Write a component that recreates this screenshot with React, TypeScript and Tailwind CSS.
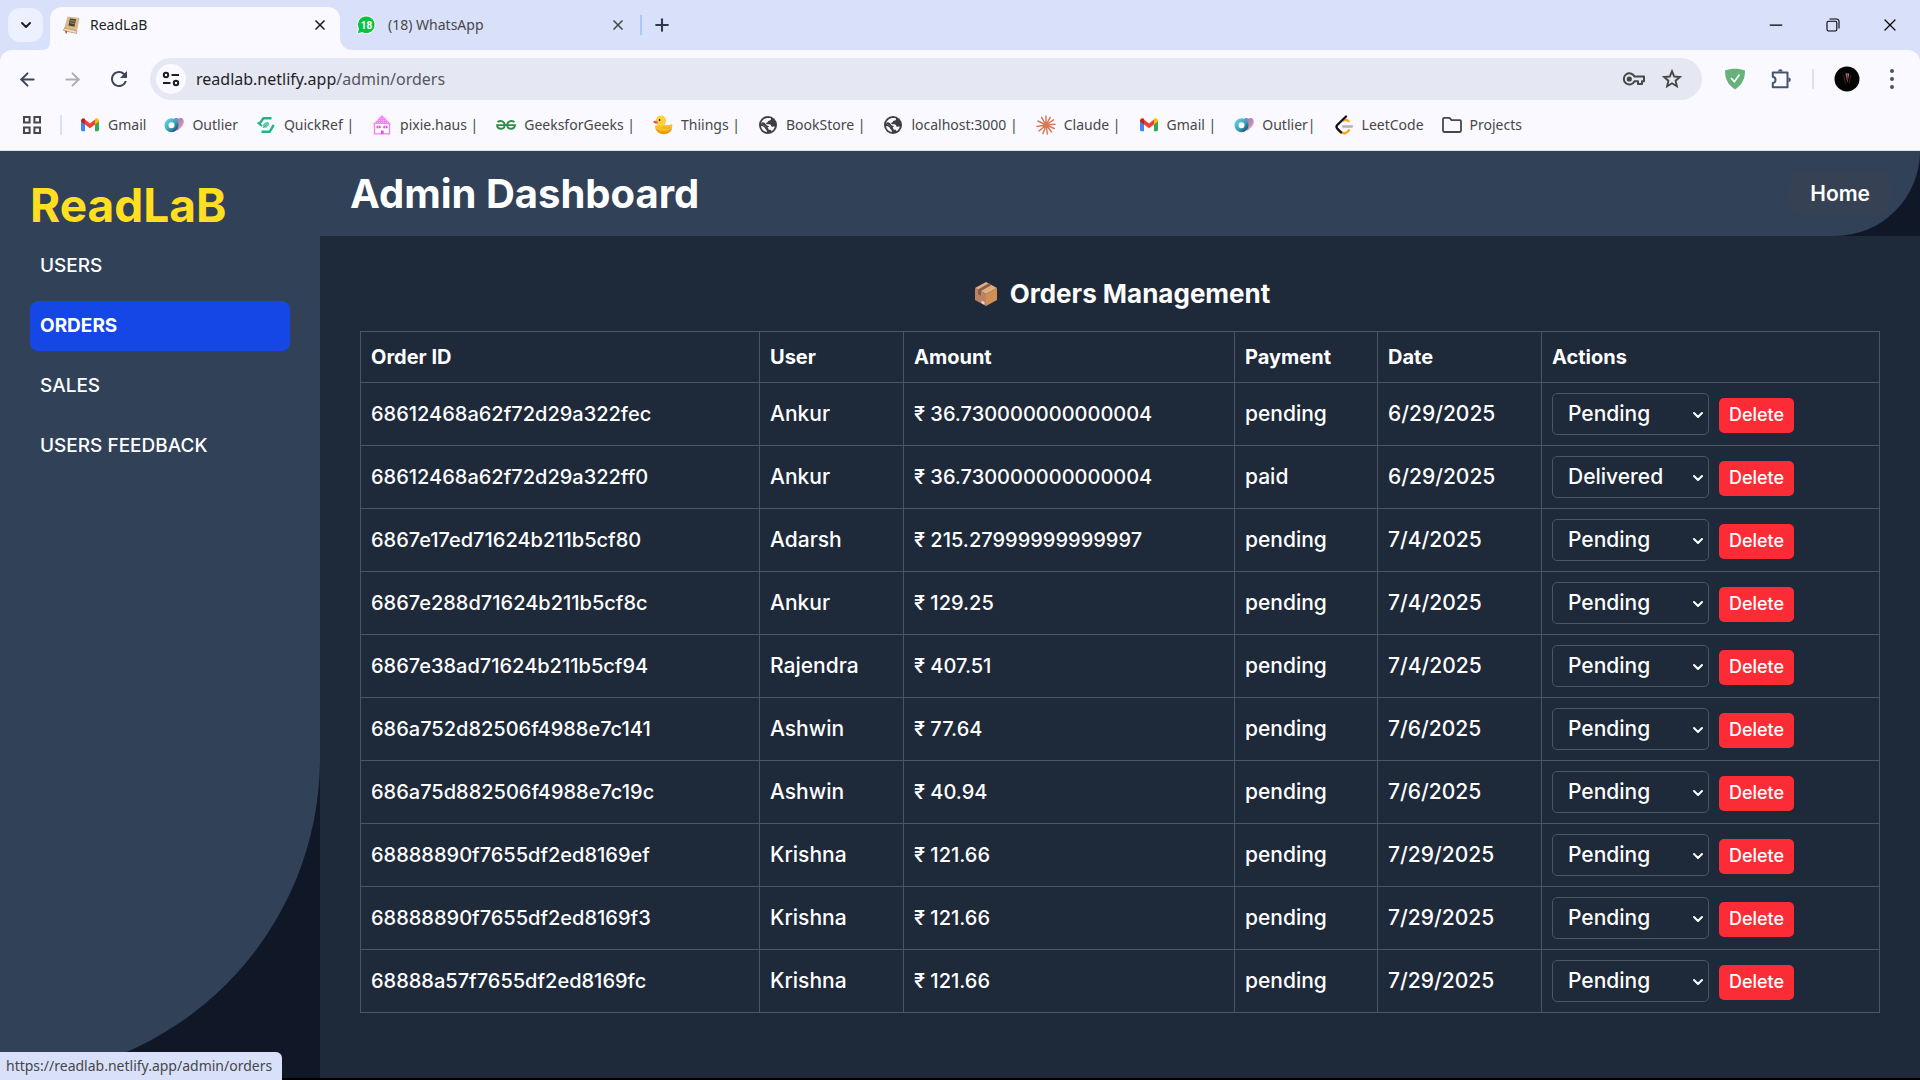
import { useState, type ReactNode } from "react";
import { ChevronDown, X, Plus, ArrowLeft, ArrowRight, Minus } from "lucide-react";
import { MdRefresh } from "react-icons/md";

type IconProps = { className?: string };

const GmailIcon = () => (
  <svg viewBox="0 0 20 20" className="size-5 shrink-0">
    <path d="M1 5.5v9.3c0 .9.6 1.5 1.5 1.5H5V8.2z" fill="#4285f4" />
    <path d="M19 5.5v9.3c0 .9-.6 1.5-1.5 1.5H15V8.2z" fill="#34a853" />
    <path d="M5 4.6v4.8l5 3.8 5-3.8V4.6l-5 3.8z" fill="#ea4335" />
    <path d="M1 5.7C1 3.6 3.300 2.600 5 3.800l0 5.600L1 6.400z" fill="#c5221f" />
    <path d="M19 5.700C19 3.600 16.700 2.600 15 3.800l0 5.600 4-3z" fill="#fbbc04" />
  </svg>
);

const OutlierIcon = () => (
  <svg viewBox="0 0 20 20" className="size-5 shrink-0">
    <defs>
      <linearGradient id="outlierHeart" x1="0" y1="0" x2="1" y2="1">
        <stop offset="0" stopColor="#6a78c8" />
        <stop offset="0.6" stopColor="#c98fae" />
        <stop offset="1" stopColor="#f3c3b4" />
      </linearGradient>
      <linearGradient id="outlierRing" x1="0" y1="0" x2="1" y2="1">
        <stop offset="0" stopColor="#5fd0de" />
        <stop offset="0.6" stopColor="#3a9bb4" />
        <stop offset="1" stopColor="#1d5576" />
      </linearGradient>
    </defs>
    <path d="M9 5c2-2.500 4-2.500 5.500-1.200C17 1.800 20 3.600 19.800 7c-.3 4-4 6.500-6.300 9z" fill="url(#outlierHeart)" />
    <circle cx="7.500" cy="10.300" r="5" fill="#fff" stroke="url(#outlierRing)" strokeWidth="4" />
  </svg>
);

const QuickRefIcon = () => (
  <svg viewBox="0 0 20 20" className="size-5 shrink-0" fill="none" stroke="#21b583">
    <path d="M15.500 3.200H7.500L3.200 9" strokeWidth="2.400" />
    <path d="M5.500 16.800h8.200l4-7" strokeWidth="2.400" />
    <path d="M1.500 7.500l4.500 3.500" strokeWidth="1.800" />
    <path d="M7.800 11.800c-.6-2.400.8-4.400 4.600-4 .2 3-1.800 5.200-4.600 4z" fill="#7bd8b8" strokeWidth=".9" />
    <path d="M7 13l3.500-3.500" strokeWidth=".9" />
  </svg>
);

const PixieIcon = () => (
  <svg viewBox="0 0 20 20" className="size-5 shrink-0">
    <path d="M10 0l2 2.500h1.500V4L17 7l2 2.500H1L3 7l3.500-3V2.500H8z" fill="#fb7af5" />
    <path d="M3 7.500h14M5 5.500h10M7.500 3.500h5" stroke="#fbd5fa" strokeWidth=".8" strokeDasharray="1 1" />
    <path d="M2.500 9v9.800h15V9" fill="#fff" stroke="#fb7af5" strokeWidth="1.300" />
    <path d="M4.500 10.800h4.200v2.400H4.500zM11.300 10.800h4.200v2.400h-4.200zM9 15.500h2.600v3.500H9z" fill="#f046e8" />
    <path d="M6.600 10.800v2.400M13.400 10.800v2.400" stroke="#fff" strokeWidth=".6" />
  </svg>
);

const GeeksIcon = () => (
  <svg viewBox="0 0 20 20" className="size-5 shrink-0" fill="none" stroke="#2f8d46" strokeWidth="1.900">
    <path d="M1.600 7.200C3 5.400 8.600 5.300 8.700 10.200c0 5-7.400 4.600-7.600-.1H18.900c-.2 4.700-7.600 5.100-7.600.1 0-4.900 5.700-4.800 7.100-3" />
  </svg>
);

const DuckIcon = () => (
  <svg viewBox="0 0 20 20" className="size-5 shrink-0">
    <path d="M2 10.500c0 5 3 8.700 8.500 8.700 5.300 0 9-3.200 8.800-9.700-.5-.8-1.500.4-3 .5-2 .2-3.600-.2-5.300-.2z" fill="#f8bf26" />
    <path d="M3 14c2 4 6 5.200 9 5 4-.3 6.500-3 7-6-3 3-9 5-16 1z" fill="#e79d10" />
    <circle cx="8" cy="5.700" r="5.200" fill="#fbd338" />
    <path d="M0 7c1-1.600 3.500-1.600 4.800 0C5 9 2 9.500 0 7z" fill="#f05a28" />
    <circle cx="6.600" cy="5" r=".9" fill="#2a2018" />
    <path d="M10 11.500c2 2 5 2.200 7 .6" stroke="#e8a715" fill="none" />
  </svg>
);

const GlobeIcon = () => (
  <svg viewBox="0 0 20 20" className="size-5 shrink-0">
    <circle cx="10" cy="10" r="9" fill="#3c4043" />
    <path d="M12.800 3.200c.7 1.800-.6 2.400-2 2.500-1 .2-.7 1.600-1.900 1.900-1.400.3-.6 1.600.3 1.700 1.800 0 3.800-.2 4 1.700.2 1 1.900.6 3.600.5-.4 2-1.600 3.800-3.400 4.800.1-1.300-.9-1.700-2.200-1.600-1.200-.2-.7-1.800-1.500-2.300C7.500 11.600 5 10.400 3 8.600 3.600 6 5.400 4 8 3.300c1.500-.6 3.500-.5 4.800-.1z" fill="#f9f9ff" />
    <path d="M3 11c1.800.2 3.800 1 4.200 2.500.2 1.300 1.800 1.200 1.800 3.400C5.800 16.600 3.200 14 3 11z" fill="#f9f9ff" />
    <path d="M3 8.600C5 6 7 8 8 9.500c.8 1.200 2 1.500 3.200 1.600l-1.700 1.600C7.500 11.600 5 10.400 3 8.600z" fill="#3c4043" />
  </svg>
);

const ClaudeIcon = () => (
  <svg viewBox="0 0 20 20" className="size-5 shrink-0" stroke="#d97757" strokeWidth="1.500" strokeLinecap="round">
    <path d="M10 10V1M10 10l4.200-7.600M10 10l7.600-5.200M10 10l9-.8M10 10l8.200 3.500M10 10l5.600 7M10 10l1.400 9M10 10l-3 8.500M10 10l-7 6M10 10l-9 1.500M10 10L2 6M10 10L5.600 2.300" />
  </svg>
);

const LeetIcon = () => (
  <svg viewBox="0 0 20 20" className="size-5 shrink-0" fill="none" strokeWidth="2.300" strokeLinecap="round">
    <path d="M14.500 6.200c-1.800-1.800-3.300-1.900-4.700-.7" stroke="#ffa116" />
    <path d="M9 11.500h9" stroke="#b3b3b3" />
    <path d="M15 15.200c-2.300 3.200-5.500 4-7.600 2" stroke="#ffa116" />
    <path d="M12 1.500L3.300 10c-1 1.100-1 2.500 0 3.600l3.700 3.800" stroke="#111" />
  </svg>
);

const FolderIcon = () => (
  <svg viewBox="0 0 20 20" className="size-5 shrink-0" fill="none" stroke="#474747" strokeWidth="1.800" strokeLinejoin="round">
    <path d="M1 4.200c0-.9.400-1.300 1.200-1.300h5.300l2 2.300h8.300c.8 0 1.200.4 1.200 1.200v9.400c0 .8-.4 1.200-1.200 1.200H2.200c-.8 0-1.200-.4-1.200-1.200z" />
  </svg>
);

const BookFavicon = () => (
  <svg viewBox="0 0 20 20" className="size-5 shrink-0">
    <path d="M5.500 1.500l12 1.500-3 15.500L1.500 15.500z" fill="#d9b98a" />
    <path d="M1.500 15.500l13 3 .5-2.500-12.500-3z" fill="#f0e2c4" stroke="#9a7748" strokeWidth=".5" />
    <path d="M8 3.500l6 .8-1.600 7.500-5.900-1.300z" fill="#4a4034" />
    <path d="M8.500 5.500l4.500.7M8 7.700l4.500.8" stroke="#c9ab7b" strokeWidth=".8" />
    <path d="M3.300 15.500l1.800.6-.4 2.600-1.200-.8z" fill="#c0392b" />
  </svg>
);

const WhatsAppFavicon = () => (
  <svg viewBox="0 0 20 20" className="size-5 shrink-0">
    <path d="M10.500 1a8.800 8.800 0 1 1-4.300 16.600L1 19l1.400-5A8.800 8.800 0 0 1 10.500 1z" fill="#0dc143" stroke="#fff" strokeWidth="1" />
    <text x="10.500" y="13.500" textAnchor="middle" fontSize="10" fontWeight="700" fill="#fff" fontFamily="Roboto, sans-serif">18</text>
  </svg>
);

const SiteInfoIcon = () => (
  <svg viewBox="0 0 20 20" className="size-5" fill="none" stroke="#1f1f1f" strokeWidth="2">
    <circle cx="5" cy="6" r="2.200" />
    <path d="M10.500 6H18M2 14h7.500" />
    <circle cx="15" cy="14" r="2.200" />
  </svg>
);

const KeyIcon = () => (
  <svg viewBox="0 0 24 16" className="h-4 w-6" fill="none" stroke="#474747" strokeWidth="2">
    <path d="M12.500 5.500H22v4.800h-2V13h-4v-2.700h-3.500A5.600 5.600 0 1 1 12.500 5.500z" strokeLinejoin="round" />
    <circle cx="7.300" cy="8" r="1.600" fill="#474747" />
  </svg>
);

const StarIcon = () => (
  <svg viewBox="0 0 20 20" className="size-5" fill="none" stroke="#474747" strokeWidth="1.900">
    <path d="M10 2.200l2.200 5.300 5.700.5-4.300 3.700 1.300 5.600L10 14.300l-4.900 3 1.300-5.600L2.100 8l5.700-.5z" />
  </svg>
);

const ShieldIcon = () => (
  <svg viewBox="0 0 22 22" className="size-[22px]">
    <path d="M11 .8c3.500 0 7 .6 10 1.800 0 8-2.500 14-10 18.900C3.500 16.600 1 10.600 1 2.600 4 1.400 7.500.8 11 .8z" fill="#68b279" />
    <path d="M7 10l3.400 3.700L15.500 6.500" fill="none" stroke="#fff" strokeWidth="1.700" />
  </svg>
);

const PuzzleIcon = () => (
  <svg viewBox="0 0 22 22" className="size-[22px]" fill="none" stroke="#44546f" strokeWidth="2">
    <path d="M3 4.500h14.500v14.800H2.800v-4.300c3.600-.6 3.600-5.600 0-6.200V4.500z" strokeLinejoin="round" />
    <path d="M8 3.500a2.300 2.300 0 0 1 4.600 0zM18.500 9.500a2.300 2.300 0 0 1 0 4.600z" fill="#44546f" stroke="none" />
  </svg>
);

const AvatarIcon = () => (
  <svg viewBox="0 0 26 26" className="size-[26px]">
    <circle cx="13" cy="13" r="12.500" fill="#050505" />
    <path d="M11.500 7.500l1.900 9 1.800-9z" fill="#999" />
    <path d="M12.900 8h1l.3 5-.8 3-.8-3z" fill="#8d1c1c" />
    <path d="M9.500 8.500l2 9M17 8.500l-2 9" stroke="#333" strokeWidth=".8" />
  </svg>
);

const RestoreIcon = () => (
  <svg viewBox="0 0 14 14" className="size-3.5" fill="none" stroke="#000" strokeWidth="1.100">
    <rect x="1" y="3.200" width="9.800" height="9.800" rx="1.500" />
    <path d="M3.500 1h7a2.500 2.500 0 0 1 2.500 2.500v7" />
  </svg>
);

const AppsIcon = () => (
  <svg viewBox="0 0 20 20" className="size-5" fill="none" stroke="#474747" strokeWidth="2">
    <path d="M2 2h5.600v5.600H2zM12.400 2H18v5.600h-5.600zM2 12.400h5.600V18H2zM12.400 12.400H18V18h-5.600z" />
  </svg>
);

const PackageIcon = ({ className }: IconProps) => (
  <svg viewBox="0 0 24 26" className={className}>
    <path d="M12 1L1 7l11 6 11-6z" fill="#e0ae80" />
    <path d="M1 7l11 6v12L1 19z" fill="#bb8266" />
    <path d="M23 7l-11 6v12l11-6z" fill="#cf9054" />
    <path d="M14.500 2.400L17.500 4 7 10v5l-3-1.800V8.500z" fill="#8b5d49" />
    <path d="M7.500 19.500l3 1.600v2.600l-3-1.600z" fill="#e6d5df" />
  </svg>
);

type Bookmark = { label: string; icon: ReactNode };

const bookmarks: Bookmark[] = [
  { label: "Gmail", icon: <GmailIcon /> },
  { label: "Outlier", icon: <OutlierIcon /> },
  { label: "QuickRef |", icon: <QuickRefIcon /> },
  { label: "pixie.haus |", icon: <PixieIcon /> },
  { label: "GeeksforGeeks |", icon: <GeeksIcon /> },
  { label: "Thiings |", icon: <DuckIcon /> },
  { label: "BookStore |", icon: <GlobeIcon /> },
  { label: "localhost:3000 |", icon: <GlobeIcon /> },
  { label: "Claude |", icon: <ClaudeIcon /> },
  { label: "Gmail |", icon: <GmailIcon /> },
  { label: "Outlier|", icon: <OutlierIcon /> },
  { label: "LeetCode", icon: <LeetIcon /> },
  { label: "Projects", icon: <FolderIcon /> },
];

function BrowserChrome() {
  return (
    <header className="shrink-0 border-b border-[#dfe3e8] bg-[#d9e1fa] font-['Noto_Sans',sans-serif] text-sm text-[#1f1f1f]">
      <div className="flex h-[50px] items-center">
        <button aria-label="Search tabs" className="ml-2 flex h-[34px] w-[35px] items-center justify-center rounded-xl bg-[#edf1ff]">
          <ChevronDown className="size-4" strokeWidth={3} />
        </button>
        <div className="flex self-end">
          <span className="w-[7px] self-end bg-[#faf9ff]">
            <span className="block h-3 rounded-br-xl bg-[#d9e1fa]" />
          </span>
          <div className="flex h-[43px] w-[290px] items-center rounded-t-xl bg-[#faf9ff] px-3 pb-2">
            <BookFavicon />
            <span className="ml-2 flex-1">ReadLaB</span>
            <button aria-label="Close ReadLaB tab"><X className="size-4" strokeWidth={2.5} /></button>
          </div>
          <span className="w-3 self-end bg-[#faf9ff]">
            <span className="block h-3 rounded-bl-xl bg-[#d9e1fa]" />
          </span>
        </div>
        <div className="ml-1 flex w-[270px] items-center text-[#474747]">
          <WhatsAppFavicon />
          <span className="ml-3 flex-1">(18) WhatsApp</span>
          <button aria-label="Close WhatsApp tab"><X className="size-4" strokeWidth={2.5} /></button>
        </div>
        <span className="ml-3.5 h-5 w-0.5 bg-[#a8c7fa]" />
        <button aria-label="New tab" className="ml-2.5 text-[#303848]"><Plus className="size-5" strokeWidth={2.5} /></button>
        <div className="ml-auto flex items-center gap-10 pr-5 text-black">
          <button aria-label="Minimize"><Minus className="size-5" strokeWidth={1.5} /></button>
          <button aria-label="Restore"><RestoreIcon /></button>
          <button aria-label="Close window"><X className="size-5" strokeWidth={1.5} /></button>
        </div>
      </div>
      <div className="flex h-[58px] items-center rounded-t-xl bg-[#faf9ff] text-[#3c465a]">
        <div className="flex w-[150px] items-center gap-6 pl-[17px]">
          <button aria-label="Back"><ArrowLeft className="size-[21px]" strokeWidth={2.3} /></button>
          <button aria-label="Forward" className="text-[#adadb3]"><ArrowRight className="size-[21px]" strokeWidth={2.3} /></button>
          <button aria-label="Reload"><MdRefresh className="size-6" /></button>
        </div>
        <div className="flex h-[42px] flex-1 items-center rounded-full bg-[#e5e8f3] px-1.5 pr-5">
          <button aria-label="Site information" className="flex size-[30px] items-center justify-center rounded-full bg-[#faf9ff]"><SiteInfoIcon /></button>
          <div className="ml-2.5 flex-1 text-base text-[#1f1f1f]">readlab.netlify.app<span className="text-[#55575c]">/admin/orders</span></div>
          <button aria-label="Saved passwords" className="mr-4"><KeyIcon /></button>
          <button aria-label="Bookmark this page"><StarIcon /></button>
        </div>
        <div className="flex w-[218px] items-center pl-[22px]">
          <button aria-label="Ad blocker"><ShieldIcon /></button>
          <button aria-label="Extensions" className="ml-6"><PuzzleIcon /></button>
          <span className="ml-5 h-5 w-0.5 bg-[#d3e3fd]" />
          <button aria-label="Profile" className="ml-5"><AvatarIcon /></button>
          <button aria-label="Browser menu" className="ml-[30px] flex flex-col gap-1">
            <span className="size-1 rounded-full bg-[#44546f]" />
            <span className="size-1 rounded-full bg-[#44546f]" />
            <span className="size-1 rounded-full bg-[#44546f]" />
          </button>
        </div>
      </div>
      <nav aria-label="Bookmarks" className="flex h-[42px] items-center bg-[#faf9ff] pb-2 pl-[22px] text-[#474747]">
        <button aria-label="Apps"><AppsIcon /></button>
        <span className="mx-[18px] h-5 w-0.5 bg-[#d3e3fd]" />
        <div className="flex gap-[18px]">
          {bookmarks.map((b, i) => (
            <a key={i} href="#" className="flex items-center gap-2 whitespace-nowrap">
              {b.icon}
              <span>{b.label}</span>
            </a>
          ))}
        </div>
      </nav>
    </header>
  );
}

const navItems = ["USERS", "ORDERS", "SALES", "USERS FEEDBACK"];

function Sidebar() {
  return (
    <aside className="w-[320px] shrink-0 bg-[#101828]">
      <div className="h-full rounded-br-[320px] bg-[#314158] px-[30px] pt-6">
        <div className="text-[46px] leading-[60px] font-bold text-[#ffdf20]">ReadLaB</div>
        <nav className="mt-1.5 flex flex-col gap-2.5 text-[19px] font-medium">
          {navItems.map((item) => (
            <a
              key={item}
              href="#"
              className={
                item === "ORDERS"
                  ? "flex h-[50px] items-center rounded-lg bg-[#1447e6] px-2.5 font-bold"
                  : "flex h-[50px] items-center rounded-lg px-2.5"
              }
            >
              {item}
            </a>
          ))}
        </nav>
      </div>
    </aside>
  );
}

type Order = { id: string; user: string; amount: string; payment: string; date: string; status: string };

const orders: Order[] = [
  { id: "68612468a62f72d29a322fec", user: "Ankur", amount: "36.730000000000004", payment: "pending", date: "6/29/2025", status: "Pending" },
  { id: "68612468a62f72d29a322ff0", user: "Ankur", amount: "36.730000000000004", payment: "paid", date: "6/29/2025", status: "Delivered" },
  { id: "6867e17ed71624b211b5cf80", user: "Adarsh", amount: "215.27999999999997", payment: "pending", date: "7/4/2025", status: "Pending" },
  { id: "6867e288d71624b211b5cf8c", user: "Ankur", amount: "129.25", payment: "pending", date: "7/4/2025", status: "Pending" },
  { id: "6867e38ad71624b211b5cf94", user: "Rajendra", amount: "407.51", payment: "pending", date: "7/4/2025", status: "Pending" },
  { id: "686a752d82506f4988e7c141", user: "Ashwin", amount: "77.64", payment: "pending", date: "7/6/2025", status: "Pending" },
  { id: "686a75d882506f4988e7c19c", user: "Ashwin", amount: "40.94", payment: "pending", date: "7/6/2025", status: "Pending" },
  { id: "68888890f7655df2ed8169ef", user: "Krishna", amount: "121.66", payment: "pending", date: "7/29/2025", status: "Pending" },
  { id: "68888890f7655df2ed8169f3", user: "Krishna", amount: "121.66", payment: "pending", date: "7/29/2025", status: "Pending" },
  { id: "68888a57f7655df2ed8169fc", user: "Krishna", amount: "121.66", payment: "pending", date: "7/29/2025", status: "Pending" },
];

const cell = "border border-[#4a5565] px-2.5 text-xl";
const wideCell = "border border-[#4a5565] px-2.5 text-[21px]";

function OrderRow({ order }: { order: Order }) {
  const [status, setStatus] = useState(order.status);
  return (
    <tr className="h-[63px]">
      <td className={cell}>{order.id}</td>
      <td className={wideCell}>{order.user}</td>
      <td className={cell}>₹ {order.amount}</td>
      <td className={wideCell}>{order.payment}</td>
      <td className={wideCell}>{order.date}</td>
      <td className={wideCell}>
        <div className="flex items-baseline gap-2.5">
          <div className="relative">
            <select
              aria-label={`Status of order ${order.id}`}
              value={status}
              onChange={(e) => setStatus(e.target.value)}
              className="block h-[42px] w-[157px] appearance-none rounded-[5px] border border-[#4a5565] bg-[#1e2939] pl-[15px] text-white"
            >
              <option>Pending</option>
              <option>Shipped</option>
              <option>Delivered</option>
            </select>
            <ChevronDown className="pointer-events-none absolute top-3.5 right-[3px] size-4" strokeWidth={3} />
          </div>
          <button className="h-[35px] w-[75px] rounded-[5px] bg-[#fb2c36] text-lg">Delete</button>
        </div>
      </td>
    </tr>
  );
}

function OrdersPage() {
  return (
    <main className="flex-1 px-10 pt-[37px]">
      <h2 className="flex items-center justify-center gap-3 pl-1 text-[26px] leading-[42px] font-bold">
        <PackageIcon className="h-[26px] w-6" />
        Orders Management
      </h2>
      <table className="mt-4 w-full table-fixed border-collapse text-left text-xl font-medium">
        <colgroup>
          <col className="w-[399px]" />
          <col className="w-[144px]" />
          <col className="w-[331px]" />
          <col className="w-[143px]" />
          <col className="w-[164px]" />
          <col />
        </colgroup>
        <thead>
          <tr className="h-[51px]">
            {["Order ID", "User", "Amount", "Payment", "Date", "Actions"].map((h) => (
              <th key={h} className="border border-[#4a5565] px-2.5 font-bold">{h}</th>
            ))}
          </tr>
        </thead>
        <tbody>
          {orders.map((o) => (
            <OrderRow key={o.id} order={o} />
          ))}
        </tbody>
      </table>
    </main>
  );
}

export default function App() {
  return (
    <div className="flex min-h-screen flex-col bg-black">
      <BrowserChrome />
      <div className="mb-0.5 flex flex-1 bg-[#1e2939] font-['Inter','Open_Sans',sans-serif] text-white">
        <Sidebar />
        <div className="flex min-w-0 flex-1 flex-col">
          <div className="bg-[#101828]">
            <div className="flex h-[85px] items-center justify-between rounded-br-[85px] bg-[#314158] px-[30px]">
              <h1 className="text-[40px] leading-[48px] font-bold">Admin Dashboard</h1>
              <a href="#" className="flex h-[45px] items-center rounded-[10px] bg-[#364153] px-5 text-[21px] font-semibold">Home</a>
            </div>
          </div>
          <OrdersPage />
        </div>
      </div>
      <div className="fixed bottom-0 left-0 flex h-7 w-[282px] items-center rounded-tr-md bg-[#d9e1fa] pl-1.5 font-['Noto_Sans',sans-serif] text-sm text-[#474747]">
        https://readlab.netlify.app/admin/orders
      </div>
    </div>
  );
}
